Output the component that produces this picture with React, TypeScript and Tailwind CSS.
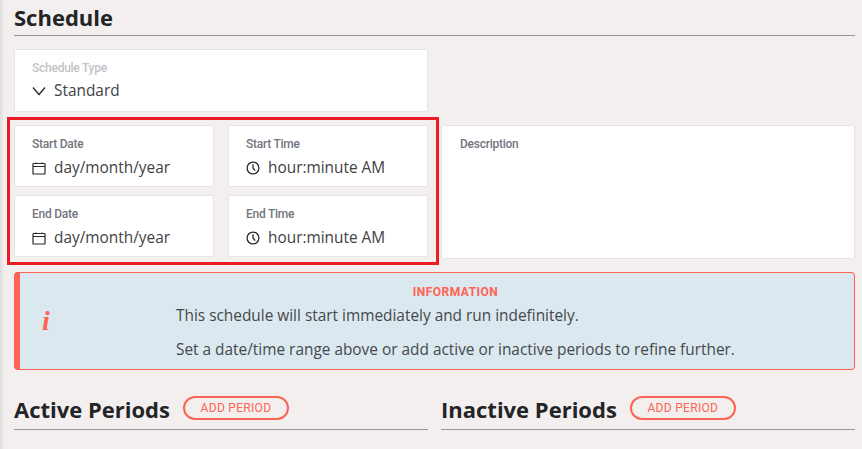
const OPEN = "font-['Open_Sans',sans-serif]"
const ROBOTO = "font-['Roboto',sans-serif]"

function FieldCard({ label, value, icon }: { label: string; value: string; icon: 'date' | 'time' }) {
  return (
    <div className="h-[62px] bg-white rounded-[2px] border border-[#e6e4e4] pl-[17px] pt-[10px]">
      <div className={`${ROBOTO} text-[12px] tracking-[-0.25px] leading-[16px] font-medium text-[#72757e]`}>{label}</div>
      <div className="flex items-center h-[24px] mt-[4px]">
        <span className="w-[22px] flex-shrink-0 flex items-center">
          {icon === 'date' ? (
            <svg width="14" height="13" viewBox="0 0 14 13" fill="none" stroke="#26282c" strokeWidth="1.2">
              <rect x="1" y="1.5" width="12" height="10.5" rx="0.6" />
              <path d="M1 4.5h12M4 0.5v1.5M10 0.5v1.5" />
            </svg>
          ) : (
            <svg width="14" height="14" viewBox="0 0 14 14" fill="none" stroke="#26282c" strokeWidth="1.3" className="ml-[-0.5px]">
              <circle cx="7" cy="7" r="5.9" />
              <path d="M7 3.2V7l2.2 2.6" />
            </svg>
          )}
        </span>
        <span className={`${OPEN} text-[15.4px] text-[#3f4246]`}>{value}</span>
      </div>
    </div>
  )
}

function PeriodHeading({ title }: { title: string }) {
  return (
    <div className="border-b border-[#97979a] h-[34px] flex items-start">
      <span className={`${OPEN} text-[22px] leading-[27px] font-bold text-[#222427]`}>{title}</span>
      <button className={`${ROBOTO} ml-[13px] w-[106px] h-[24px] rounded-full border-2 border-[#fe6354] text-[12px] font-normal tracking-[0.3px] text-[#fe6354] flex items-center justify-center`}>
        ADD PERIOD
      </button>
    </div>
  )
}

export default function App() {
  return (
    <div className="relative h-[449px] w-full overflow-hidden bg-[#f3efee] pl-[14px] pr-[7px] pt-[4px]">
      <div className="absolute left-0 top-0 h-full w-[4px] bg-gradient-to-r from-[#dedbda] to-[#f3efee]" />

      <div className="border-b border-[#97979a] h-[32px]">
        <h1 className={`${OPEN} text-[22px] leading-[27px] font-bold text-[#222427]`}>Schedule</h1>
      </div>

      <div className="mt-[13px] w-[414px] h-[63px] bg-white rounded-[2px] border border-[#e6e4e4] pl-[17px] pt-[10px]">
        <div className={`${ROBOTO} text-[12px] tracking-[-0.25px] leading-[16px] font-medium text-[#c3c3c6]`}>Schedule Type</div>
        <div className="flex items-center h-[24px] mt-[3px]">
          <span className="w-[22px] flex-shrink-0 flex items-center">
            <svg width="14" height="10" viewBox="0 0 14 10" fill="none" stroke="#33363a" strokeWidth="1.5">
              <path d="M1 1.5l6 7 6-7" />
            </svg>
          </span>
          <span className={`${OPEN} text-[15.4px] text-[#3f4246]`}>Standard</span>
        </div>
      </div>

      <div className="mt-[13px] flex gap-[13px]">
        <div className="w-[414px] grid grid-cols-[200px_200px] content-start gap-x-[14px] gap-y-[8px]">
          <FieldCard label="Start Date" value="day/month/year" icon="date" />
          <FieldCard label="Start Time" value="hour:minute AM" icon="time" />
          <FieldCard label="End Date" value="day/month/year" icon="date" />
          <FieldCard label="End Time" value="hour:minute AM" icon="time" />
        </div>
        <div className="w-[414px] h-[134px] bg-white rounded-[2px] border border-[#e6e4e4] pl-[18px] pt-[10px]">
          <div className={`${ROBOTO} text-[12px] tracking-[-0.25px] leading-[16px] font-medium text-[#72757e]`}>Description</div>
        </div>
      </div>

      <div className="mt-[13px] h-[98px] rounded-[4px] border border-[#fe6354] border-l-[6px] bg-[#dbe8ef] flex">
        <div className="w-[156px] flex-shrink-0 pl-[22px] pt-[33px]">
          <span className="block font-['Liberation_Serif',serif] italic font-bold text-[28px] leading-[30px] text-[#fe6354]">i</span>
        </div>
        <div className="flex-1 pt-[11px]">
          <div className={`${ROBOTO} text-[12px] leading-[16px] font-bold tracking-[0.5px] text-[#fe6354] text-center pr-[119px]`}>
            INFORMATION
          </div>
          <p className={`${OPEN} text-[15.4px] leading-[20px] text-[#45484c] mt-[6px]`}>
            This schedule will start immediately and run indefinitely.
          </p>
          <p className={`${OPEN} text-[15.4px] leading-[20px] text-[#45484c] mt-[14px]`}>
            Set a date/time range above or add active or inactive periods to refine further.
          </p>
        </div>
      </div>

      <div className="mt-[26px] grid grid-cols-2 gap-x-[13px]">
        <PeriodHeading title="Active Periods" />
        <PeriodHeading title="Inactive Periods" />
      </div>

      {/* annotation box */}
      <div className="absolute left-[7px] top-[117px] w-[432px] h-[148px] border-[3px] border-[#ed1c24]" />
    </div>
  )
}
